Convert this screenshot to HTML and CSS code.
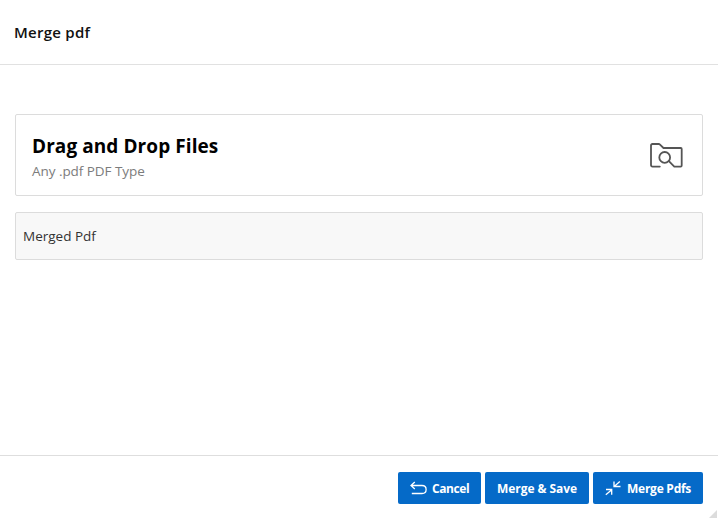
FILE: index.html
```html
<!DOCTYPE html>
<html lang="en">
<head>
<meta charset="utf-8">
<title>Merge pdf</title>
<link rel="stylesheet" href="styles.css">
</head>
<body>
<div class="dialog">
  <header class="dialog-header"><h1 class="dialog-title">Merge pdf</h1></header>
  <main class="dialog-body">
    <section class="dropzone">
      <div class="dropzone-text">
        <h2 class="dropzone-title">Drag and Drop Files</h2>
        <p class="dropzone-hint">Any .pdf PDF Type</p>
      </div>
      <svg class="dropzone-icon" viewBox="0 0 36 28" width="36" height="28">
        <path d="M10.800 24.600H3.500Q2 24.600 2 23.100V3.500Q2 2 3.500 2H9.700Q10.400 2 11 2.600L14.500 6H31.800Q32.700 6 32.700 7V23.600Q32.700 24.600 31.700 24.600H25.300L19.900 19.200"/>
        <circle cx="15.700" cy="15.400" r="5.400"/>
      </svg>
    </section>
    <section class="merged"><span class="merged-label">Merged Pdf</span></section>
  </main>
  <footer class="dialog-footer">
    <button class="btn btn-cancel">
      <svg class="btn-icon" viewBox="0 0 18 16" width="18" height="16"><path d="M4.800 1L1 4.500L4.800 8M1 4.500H12C17.500 4.500 17.500 12.500 12 12.500H1.800"/></svg>
      <span class="label-cancel">Cancel</span>
    </button>
    <button class="btn btn-save"><span class="label-save">Merge &amp; Save</span></button>
    <button class="btn btn-merge">
      <svg class="btn-icon" viewBox="0 0 18 16" width="18" height="16"><path d="M14.800 0.500L9.500 5.200M9 0.500V5.500H15.500M0.800 13.800L6.500 9M1 8.500H6.700V13.800"/></svg>
      <span class="label-merge">Merge Pdfs</span>
    </button>
  </footer>
  <svg class="resize-grip" viewBox="0 0 8 8" width="8" height="8"><path d="M8 0V8H0Z"/></svg>
</div>
</body>
</html>
```
FILE: styles.css
```css
* { box-sizing: border-box; }
body {
  margin: 0;
  background: #fff;
  color: #000;
  font-family: "Segoe UI", "Open Sans", "Noto Sans", sans-serif;
}
h1, h2, p { margin: 0; }
.dialog { position: relative; display: flex; flex-direction: column; height: 518px; overflow: hidden; }
.dialog-header { height: 65px; padding: 21px 14px 0; border-bottom: 1px solid #e1e1e1; }
.dialog-title { color: #111; font-size: 15px; line-height: 22px; font-weight: 600; letter-spacing: 0.25px; }
.dialog-body { flex: 1; padding: 49px 15px 0; }
.dropzone {
  display: flex;
  justify-content: space-between;
  align-items: center;
  height: 82px;
  padding: 1px 17px 0 16px;
  border: 1px solid #dcdcdc;
  border-radius: 2px;
}
.dropzone-text { padding-top: 4px; }
.dropzone-title { font-size: 19px; line-height: 27px; font-weight: 700; letter-spacing: 0.08px; }
.dropzone-hint { color: #7c7c7c; font-size: 13.5px; line-height: 22px; font-weight: 400; letter-spacing: -0.05px; }
.dropzone-icon { fill: none; stroke: #555; stroke-width: 1.8; stroke-linecap: round; stroke-linejoin: round; }
.merged {
  display: flex;
  align-items: center;
  height: 48px;
  margin-top: 16px;
  padding-left: 7px;
  background: #f8f8f8;
  border: 1px solid #dcdcdc;
  border-radius: 2px;
}
.merged-label { color: #333; font-size: 13.5px; line-height: 20px; }
.dialog-footer {
  display: flex;
  justify-content: flex-end;
  gap: 4px;
  height: 63px;
  padding: 16px 15px 0;
  border-top: 1px solid #dedede;
}
.btn {
  display: flex;
  align-items: center;
  height: 32px;
  padding: 1px 0 0 12px;
  border: 0;
  border-radius: 2px;
  background: #056ac8;
  color: #fff;
  font: 700 12px/20px "Segoe UI", "Open Sans", "Noto Sans", sans-serif;
  white-space: nowrap;
}
.btn-cancel { width: 83px; }
.btn-save { width: 104px; }
.btn-merge { width: 110px; }
.btn-icon { flex: none; margin-right: 4px; fill: none; stroke: #fff; stroke-width: 1.3; }
.label-cancel { letter-spacing: -0.4px; }
.label-save { letter-spacing: -0.05px; }
.label-merge { letter-spacing: -0.25px; }
.resize-grip { position: absolute; right: 1px; bottom: 0; fill: #dcdcdc; }
```
